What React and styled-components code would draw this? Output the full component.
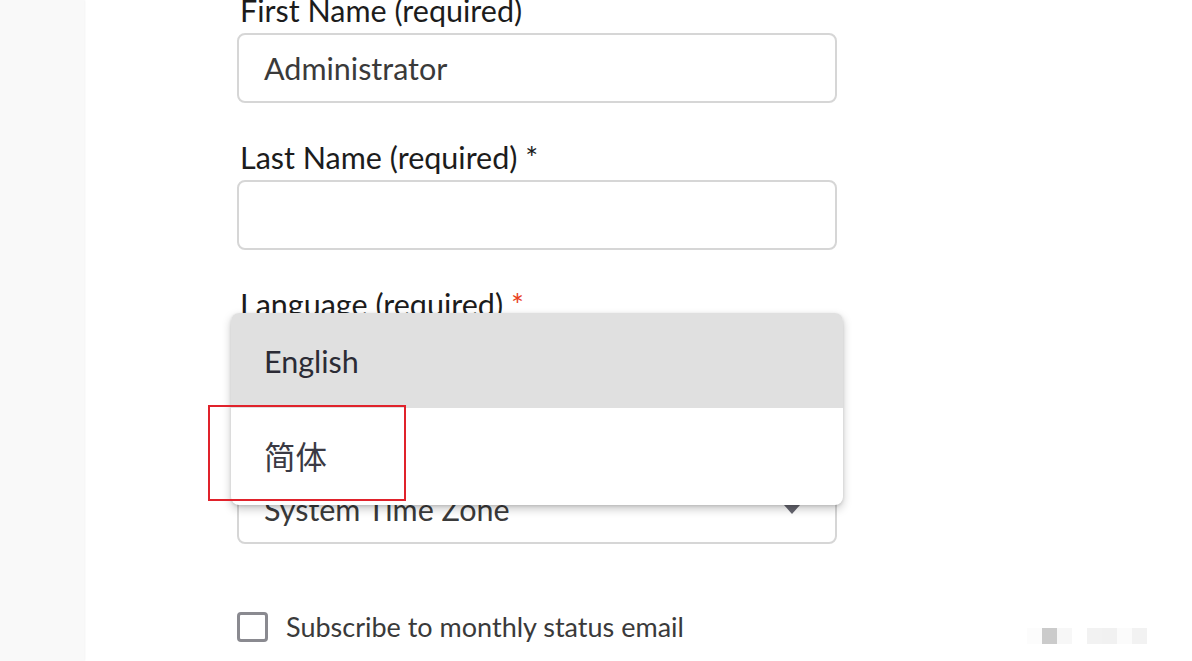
import React from "react";
import styled, { createGlobalStyle } from "styled-components";

const GlobalStyle = createGlobalStyle`
  html, body {
    margin: 0;
    padding: 0;
    height: 661px;
    overflow: hidden;
    background: #ffffff;
  }
  body {
    font-family: Lato, "Noto Sans CJK SC", sans-serif;
  }
`;

const StyledPage = styled.div`
  display: flex;
  height: 661px;
  position: relative;
`;
const StyledSidebar = styled.div`
  width: 84px;
  flex: none;
  background: #f9f9f9;
  box-shadow: 1px 0 2px rgba(0, 0, 0, 0.05);
`;
const StyledMain = styled.div`
  flex: 1;
  padding-left: 153px;
`;
const StyledForm = styled.form`
  width: 600px;
  margin-top: -8px;
`;
const StyledField = styled.div`
  position: relative;
  margin-bottom: 36px;
`;
const StyledLabel = styled.label`
  display: block;
  margin: 0 0 5px 3px;
  font-size: 30.5px;
  line-height: 36px;
  color: #1c1c1c;
`;
const StyledStar = styled.span`
  color: ${(p) => (p.$red ? "#e9411d" : "#1c1c1c")};
`;
const StyledInput = styled.div`
  box-sizing: border-box;
  position: relative;
  display: flex;
  align-items: center;
  height: 70px;
  padding: 0 25px;
  border: 2px solid #d6d6d6;
  border-radius: 8px;
  font-size: 30.5px;
  line-height: 36px;
  color: #3a3a3a;
`;
const StyledArrow = styled.span`
  position: absolute;
  right: 35px;
  top: 50%;
  margin-top: -4px;
  width: 0;
  height: 0;
  border-left: 8px solid transparent;
  border-right: 8px solid transparent;
  border-top: 9px solid #666670;
`;
const StyledMenu = styled.ul`
  position: absolute;
  z-index: 2;
  top: 27px;
  left: -6px;
  width: 612px;
  margin: 0;
  padding: 0;
  list-style: none;
  background: #ffffff;
  border-radius: 8px;
  box-shadow: 0 4px 10px rgba(0, 0, 0, 0.22), 0 1px 3px rgba(0, 0, 0, 0.12);
`;
const StyledOption = styled.li`
  display: flex;
  align-items: center;
  height: ${(p) => p.$height}px;
  padding-left: 33px;
  font-size: 30.5px;
  line-height: 36px;
  color: #2b2b35;
  background: ${(p) => (p.$active ? "#e0e0e0" : "transparent")};
  border-radius: ${(p) => (p.$first ? "8px 8px 0 0" : "0 0 8px 8px")};
`;
const StyledCjk = styled.span`
  font-size: 31.5px;
  color: #3a3a44;
`;
const StyledMark = styled.div`
  position: absolute;
  z-index: 3;
  left: -23px;
  top: 92px;
  width: 198px;
  height: 96px;
  box-sizing: border-box;
  border: 2px solid #e0222b;
  pointer-events: none;
`;
const StyledCheckRow = styled.div`
  display: flex;
  align-items: center;
  gap: 18px;
  margin-top: 67px;
`;
const StyledBox = styled.span`
  box-sizing: border-box;
  width: 31px;
  height: 30px;
  border: 3px solid #8a8a90;
  border-radius: 4px;
`;
const StyledCheckText = styled.span`
  font-size: 27px;
  line-height: 32px;
  color: #3a3a3a;
`;
const StyledStamp = styled.div`
  position: absolute;
  left: 1027px;
  top: 628px;
  display: flex;
`;
const StyledCell = styled.span`
  width: 15px;
  height: 16px;
  background: ${(p) => p.$c};
`;

const stamp = ["#fcfcfc", "#cbcbcb", "#f7f7f7", "#ffffff", "#f2f2f2", "#f1f1f1", "#fbfbfb", "#f2f2f2"];

export default function App() {
  return (
    <>
      <GlobalStyle />
      <StyledPage>
        <StyledSidebar />
        <StyledMain>
          <StyledForm>
            <StyledField>
              <StyledLabel>First Name (required)</StyledLabel>
              <StyledInput>Administrator</StyledInput>
            </StyledField>
            <StyledField>
              <StyledLabel>
                Last Name (required) <StyledStar>*</StyledStar>
              </StyledLabel>
              <StyledInput />
            </StyledField>
            <StyledField>
              <StyledLabel>
                Language (required) <StyledStar $red>*</StyledStar>
              </StyledLabel>
              <StyledInput>
                English
                <StyledArrow />
              </StyledInput>
              <StyledMenu>
                <StyledOption $active $first $height={95}>English</StyledOption>
                <StyledOption $height={97}>
                  <StyledCjk>简体</StyledCjk>
                </StyledOption>
                <StyledMark />
              </StyledMenu>
            </StyledField>
            <StyledField>
              <StyledLabel>
                Time Zone (required) <StyledStar $red>*</StyledStar>
              </StyledLabel>
              <StyledInput>
                System Time Zone
                <StyledArrow />
              </StyledInput>
            </StyledField>
            <StyledCheckRow>
              <StyledBox />
              <StyledCheckText>Subscribe to monthly status email</StyledCheckText>
            </StyledCheckRow>
          </StyledForm>
        </StyledMain>
        <StyledStamp>
          {stamp.map((c, i) => (
            <StyledCell key={i} $c={c} />
          ))}
        </StyledStamp>
      </StyledPage>
    </>
  );
}
